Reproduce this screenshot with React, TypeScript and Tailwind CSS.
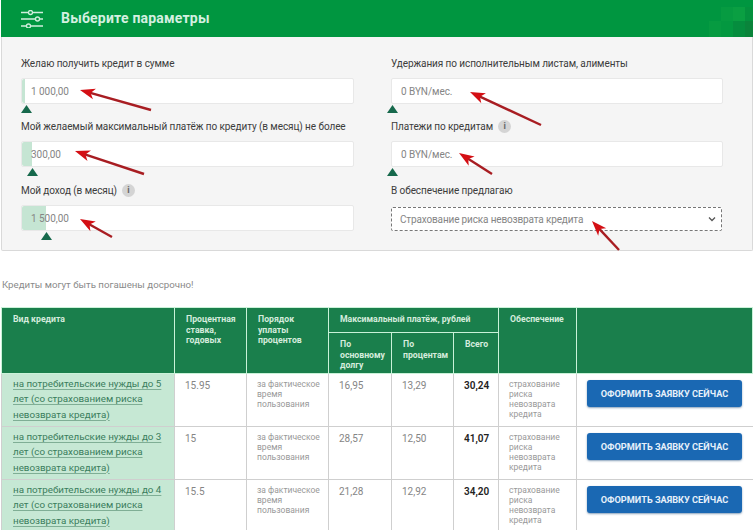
const font = { fontFamily: '"Roboto", "Liberation Sans", sans-serif' };

function Triangle({ className }: { className: string }) {
  return (
    <svg className={`absolute top-[26px] ${className}`} width="11" height="8" viewBox="0 0 11 8">
      <polygon points="5.5,0 11,8 0,8" fill="#17694c" />
    </svg>
  );
}

function Info() {
  return (
    <span className="ml-[5px] inline-flex h-[13px] w-[13px] items-center justify-center rounded-full bg-[#d4d4d4] text-[9px] font-bold leading-none text-[#666]">
      i
    </span>
  );
}

function Field({
  label,
  value,
  info,
  fill,
  tri,
}: {
  label: string;
  value: string;
  info?: boolean;
  fill?: string;
  tri: string;
}) {
  return (
    <div className="flex flex-col">
      <div className="flex h-[22px] items-center whitespace-nowrap text-[10px] tracking-[-0.08px] text-[#3c3c3c]">
        {label}
        {info && <Info />}
      </div>
      <div className="relative mt-[4px] flex h-[26px] items-center rounded-[2px] border border-[#e8e8e8] bg-white">
        {fill && <div className={`absolute inset-y-0 left-0 rounded-l-[2px] bg-[#c5e5d3] ${fill}`} />}
        <span className="relative pl-[9px] text-[10px] tracking-[-0.05px] text-[#858585]">{value}</span>
        <Triangle className={tri} />
      </div>
    </div>
  );
}

const rows = [
  { name: "на потребительские нужды до 5 лет (со страхованием риска невозврата кредита)", rate: "15.95", a: "16,95", b: "13,29", c: "30,24" },
  { name: "на потребительские нужды до 3 лет (со страхованием риска невозврата кредита)", rate: "15", a: "28,57", b: "12,50", c: "41,07" },
  { name: "на потребительские нужды до 4 лет (со страхованием риска невозврата кредита)", rate: "15.5", a: "21,28", b: "12,92", c: "34,20" },
];

const th = "border border-[#c9f2d8] pl-[11px] pr-[8px] pt-[6px] align-top text-left text-[8.7px] font-bold leading-[10.5px] text-[#d5ecdd]";
const td = "border border-[#cfcfcf] align-top";

function Arrow({ x1, y1, x2, y2 }: { x1: number; y1: number; x2: number; y2: number }) {
  const ang = Math.atan2(y2 - y1, x2 - x1);
  const p = (len: number, off: number) => {
    const x = x1 + Math.cos(ang) * len - Math.sin(ang) * off;
    const y = y1 + Math.sin(ang) * len + Math.cos(ang) * off;
    return `${x},${y}`;
  };
  return (
    <g>
      <line x1={x1 + Math.cos(ang) * 8} y1={y1 + Math.sin(ang) * 8} x2={x2} y2={y2} stroke="#a81d22" strokeWidth="2.4" />
      <polygon points={`${x1},${y1} ${p(15, -5.5)} ${p(11, 0)} ${p(15, 5.5)}`} fill="#d40f14" />
    </g>
  );
}

export default function App() {
  return (
    <div className="relative h-[530px] w-[755px] overflow-hidden bg-white" style={font}>
      <div className="relative ml-px mr-[2px] flex h-[37px] items-center overflow-hidden bg-[#009640] pl-[20px]">
        <svg width="22" height="18" viewBox="0 0 22 18" fill="none" stroke="#cfeedd" strokeWidth="1.3">
          <path d="M0 2.5H7M12 2.5H22M0 9H14M19 9H22M0 16H5M10 16H22" />
          <circle cx="9.5" cy="2.5" r="2" />
          <circle cx="16.5" cy="9" r="2" />
          <circle cx="7.5" cy="16" r="2" />
        </svg>
        <div className="ml-[18px] text-[14px] font-bold tracking-[0.2px] text-[#d4f0e0]">Выберите параметры</div>
        <svg className="absolute right-0 top-0" width="46" height="37" viewBox="0 0 46 37">
          <rect x="14" y="7" width="12" height="14" fill="#069b41" />
          <rect x="26" y="7" width="12" height="14" fill="#0a9f42" />
          <rect x="2" y="21" width="12" height="16" fill="#069b41" />
          <rect x="14" y="21" width="12" height="16" fill="#039840" />
          <rect x="26" y="21" width="12" height="16" fill="#058d3e" />
          <rect x="38" y="21" width="8" height="16" fill="#0a843b" />
          <rect x="38" y="7" width="8" height="14" fill="#04913e" />
        </svg>
      </div>

      <div className="ml-px mr-[2px] grid h-[214px] grid-cols-[333px_332px] grid-rows-[63px_64px_auto] gap-x-[37px] rounded-b-[2px] border-b border-l border-r border-[#d9d9d9] bg-[#f5f5f5] pl-[19px] pt-[15px]">
        <Field label="Желаю получить кредит в сумме" value="1 000,00" fill="w-[3px]" tri="left-[-1px]" />
        <Field label="Удержания по исполнительным листам, алименты" value="0 BYN/мес." tri="left-[-5px]" />
        <Field label="Мой желаемый максимальный платёж по кредиту (в месяц) не более" value="300,00" fill="w-[10px]" tri="left-[5px]" />
        <Field label="Платежи по кредитам" value="0 BYN/мес." info tri="left-[-5px]" />
        <Field label="Мой доход (в месяц)" value="1 500,00" info fill="w-[24px]" tri="left-[19px]" />
        <div className="flex flex-col">
          <div className="flex h-[22px] items-center whitespace-nowrap text-[10px] tracking-[-0.08px] text-[#3c3c3c]">В обеспечение предлагаю</div>
          <div className="mt-[6px] flex h-[24px] w-[331px] items-center justify-between rounded-[2px] border border-dashed border-[#777] bg-white pl-[8px] pr-[5px] text-[10px] tracking-[-0.15px] text-[#858585]">
            Страхование риска невозврата кредита
            <svg width="8" height="6" viewBox="0 0 8 6" fill="none" stroke="#555" strokeWidth="1.3">
              <path d="M1 1.5L4 4.5L7 1.5" />
            </svg>
          </div>
        </div>
      </div>

      <div className="ml-[2px] mt-[27px] text-[9.7px] leading-[14px] text-[#8a8a8a]">Кредиты могут быть погашены досрочно!</div>

      <table className="ml-px mt-[15px] w-[752px] table-fixed border-collapse">
        <colgroup>
          <col className="w-[173px]" />
          <col className="w-[72px]" />
          <col className="w-[82px]" />
          <col className="w-[63px]" />
          <col className="w-[62px]" />
          <col className="w-[45px]" />
          <col className="w-[78px]" />
          <col />
        </colgroup>
        <thead className="bg-[#1a7f4c]">
          <tr className="h-[25px]">
            <th rowSpan={2} className={th}>Вид кредита</th>
            <th rowSpan={2} className={th}>Процентная ставка, годовых</th>
            <th rowSpan={2} className={th}>Порядок уплаты процентов</th>
            <th colSpan={3} className={th}>Максимальный платёж, рублей</th>
            <th rowSpan={2} className={th}>Обеспечение</th>
            <th rowSpan={2} className={th}></th>
          </tr>
          <tr className="h-[41px]">
            <th className={th}>По основному долгу</th>
            <th className={th}>По процентам</th>
            <th className={th}>Всего</th>
          </tr>
        </thead>
        <tbody>
          {rows.map((r) => (
            <tr key={r.name} className="h-[53px]">
              <td className={`${td} bg-[#c6e8d4] pl-[11px] pr-0 pt-[2px] text-[9.8px] leading-[15.3px] text-[#3a7d5c]`}>
                <span className="underline decoration-[#7fae95] underline-offset-2">{r.name}</span>
              </td>
              <td className={`${td} pl-[10px] pt-[4px] text-[10px] text-[#858585]`}>{r.rate}</td>
              <td className={`${td} pl-[10px] pr-0 pt-[5px] text-[8.5px] leading-[10px] text-[#999]`}>
                за фактическое время пользования
              </td>
              <td className={`${td} pl-[10px] pt-[4px] text-[10px] text-[#858585]`}>{r.a}</td>
              <td className={`${td} pl-[10px] pt-[4px] text-[10px] text-[#858585]`}>{r.b}</td>
              <td className={`${td} pl-[10px] pt-[4px] text-[10px] font-semibold text-[#222]`}>{r.c}</td>
              <td className={`${td} pl-[10px] pr-0 pt-[5px] text-[8.5px] leading-[10px] text-[#999]`}>
                страхование риска невозврата кредита
              </td>
              <td className={`${td} border-r-0 pl-[10px] pt-[6px]`}>
                <div className="flex h-[27px] w-[155px] items-center justify-center rounded-[3px] bg-[#1a68b3] text-[9.2px] font-bold uppercase text-[#e6f0fa] shadow-[0_1px_2px_rgba(20,70,120,0.5)]">
                  Оформить заявку сейчас
                </div>
              </td>
            </tr>
          ))}
        </tbody>
      </table>

      <svg className="pointer-events-none absolute left-0 top-0" width="755" height="530">
        <Arrow x1={80} y1={90} x2={151} y2={110} />
        <Arrow x1={75} y1={151} x2={144} y2={174} />
        <Arrow x1={80} y1={219} x2={112} y2={237} />
        <Arrow x1={470} y1={92} x2={541} y2={125} />
        <Arrow x1={459} y1={153} x2={492} y2={174} />
        <Arrow x1={592} y1={221} x2={619} y2={250} />
      </svg>
    </div>
  );
}
